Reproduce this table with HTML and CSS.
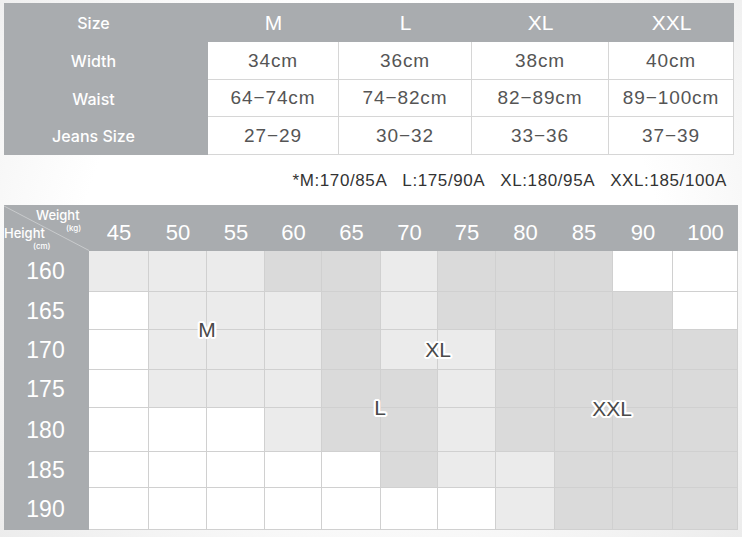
FILE: index.html
```html
<!DOCTYPE html>
<html>
<head>
<meta charset="utf-8">
<link rel="stylesheet" href="styles.css">
</head>
<body>
<div class="page">
  <div class="sizes">
    <div class="lab head">Size</div>
    <div class="hd">M</div><div class="hd">L</div><div class="hd">XL</div><div class="hd">XXL</div>
    <div class="lab">Width</div>
    <div class="val">34cm</div><div class="val">36cm</div><div class="val">38cm</div><div class="val">40cm</div>
    <div class="lab">Waist</div>
    <div class="val">64−74cm</div><div class="val">74−82cm</div><div class="val">82−89cm</div><div class="val">89−100cm</div>
    <div class="lab">Jeans Size</div>
    <div class="val">27−29</div><div class="val">30−32</div><div class="val">33−36</div><div class="val">37−39</div>
  </div>

  <div class="note">
    <span>*M:170/85A</span><span>L:175/90A</span><span>XL:180/95A</span><span>XXL:185/100A</span>
  </div>

  <div class="chart">
    <div class="corner">
      <svg class="diag" width="85" height="46" viewBox="0 0 85 46"><line x1="0" y1="1" x2="86" y2="46" stroke="#c8cacc" stroke-width="1"/></svg>
      <span class="wt">Weight</span><span class="kg">(kg)</span>
      <span class="ht">Height</span><span class="cm">(cm)</span>
    </div>
    <div class="ch">45</div><div class="ch">50</div><div class="ch">55</div><div class="ch">60</div><div class="ch">65</div><div class="ch">70</div><div class="ch">75</div><div class="ch">80</div><div class="ch">85</div><div class="ch">90</div><div class="ch">100</div>

    <div class="rh">160</div>
    <div class="c l"></div><div class="c l"></div><div class="c l"></div><div class="c d"></div><div class="c d"></div><div class="c l"></div><div class="c d"></div><div class="c d"></div><div class="c d"></div><div class="c w"></div><div class="c w"></div>

    <div class="rh">165</div>
    <div class="c w"></div><div class="c l"></div><div class="c l"></div><div class="c l"></div><div class="c d"></div><div class="c l"></div><div class="c d"></div><div class="c d"></div><div class="c d"></div><div class="c d"></div><div class="c w"></div>

    <div class="rh">170</div>
    <div class="c w"></div><div class="c l"></div><div class="c l"></div><div class="c l"></div><div class="c d"></div><div class="c l"></div><div class="c l"></div><div class="c d"></div><div class="c d"></div><div class="c d"></div><div class="c d"></div>

    <div class="rh">175</div>
    <div class="c w"></div><div class="c l"></div><div class="c l"></div><div class="c l"></div><div class="c d"></div><div class="c d"></div><div class="c l"></div><div class="c d"></div><div class="c d"></div><div class="c d"></div><div class="c d"></div>

    <div class="rh">180</div>
    <div class="c w"></div><div class="c w"></div><div class="c w"></div><div class="c l"></div><div class="c d"></div><div class="c d"></div><div class="c l"></div><div class="c d"></div><div class="c d"></div><div class="c d"></div><div class="c d"></div>

    <div class="rh">185</div>
    <div class="c w"></div><div class="c w"></div><div class="c w"></div><div class="c w"></div><div class="c w"></div><div class="c d"></div><div class="c l"></div><div class="c l"></div><div class="c d"></div><div class="c d"></div><div class="c d"></div>

    <div class="rh">190</div>
    <div class="c w"></div><div class="c w"></div><div class="c w"></div><div class="c w"></div><div class="c w"></div><div class="c w"></div><div class="c w"></div><div class="c l"></div><div class="c d"></div><div class="c d"></div><div class="c d"></div>

    <span class="tag tag-m">M</span>
    <span class="tag tag-xl">XL</span>
    <span class="tag tag-l">L</span>
    <span class="tag tag-xxl">XXL</span>
  </div>
</div>
</body>
</html>
```

FILE: styles.css
```css
* { box-sizing: border-box; }
html, body { margin: 0; padding: 0; }
body {
  width: 742px;
  height: 537px;
  overflow: hidden;
  background: radial-gradient(ellipse at 50% 45%, #ffffff 55%, #ececec 100%);
  font-family: "Liberation Sans", Arial, sans-serif;
}
.page {
  padding: 3px 0 0 4px;
}

/* top size table */
.sizes {
  display: grid;
  grid-template-columns: 204px 131px 133px 137px 125px;
  grid-template-rows: 39px 38px 37px 38px;
  background: #a9acaf;
  width: 730px;
}
.lab {
  display: flex;
  align-items: center;
  justify-content: center;
  padding-right: 25px;
  color: #fff;
  font-family: Inter, "Open Sans", sans-serif;
  font-weight: 500;
  font-size: 16px;
}
.hd {
  display: flex;
  align-items: center;
  justify-content: center;
  color: #fff;
  font-size: 21px;
  font-family: "Liberation Sans", Arial, sans-serif;
}
.val {
  display: flex;
  align-items: center;
  justify-content: center;
  background: #fff;
  color: #555;
  font-size: 19px;
  letter-spacing: 0.9px;
  border-right: 1px solid #d6d6d6;
  border-bottom: 1px solid #d6d6d6;
}

/* note */
.note {
  height: 50px;
  display: flex;
  align-items: center;
  justify-content: flex-end;
  gap: 15px;
  padding-right: 11px;
  padding-top: 2px;
  color: #333;
  font-size: 17px;
  letter-spacing: 0.6px;
  width: 734px;
}

/* weight/height chart */
.chart {
  position: relative;
  display: grid;
  grid-template-columns: 85px 60px 58px 58px 57px 59px 57px 58px 59px 58px 60px 65px;
  grid-template-rows: 46px 41px 38px 40px 38px 44px 36px 42px;
  background: #a9acaf;
  width: 734px;
}
.corner {
  position: relative;
  color: #fff;
  font-family: Inter, "Open Sans", sans-serif;
  font-weight: 500;
  line-height: 1;
}
.diag { position: absolute; left: 0; top: 0; }
.wt { position: absolute; left: 32px; top: 4px; font-size: 13px; }
.kg { position: absolute; left: 62px; top: 19px; font-size: 8px; }
.ht { position: absolute; left: 0; top: 22px; font-size: 13px; }
.cm { position: absolute; left: 29px; top: 37px; font-size: 8px; }
.ch {
  display: flex;
  align-items: center;
  justify-content: center;
  color: #fff;
  font-size: 22px;
  padding-top: 9px;
}
.rh {
  display: flex;
  align-items: center;
  justify-content: center;
  color: #fff;
  font-size: 23px;
  padding-right: 2px;
}
.c {
  border-right: 1px solid #d0d0d0;
  border-bottom: 1px solid #d0d0d0;
}
.c.w { background: #ffffff; }
.c.l { background: #ebebeb; }
.c.d { background: #dadada; }

.tag {
  position: absolute;
  transform: translate(-50%, -50%);
  color: #4a4a4a;
  font-size: 21px;
  text-shadow:
    1px 0 0 #fff, -1px 0 0 #fff, 0 1px 0 #fff, 0 -1px 0 #fff,
    2px 0 0 #fff, -2px 0 0 #fff, 0 2px 0 #fff, 0 -2px 0 #fff,
    1px 1px 0 #fff, -1px -1px 0 #fff, 1px -1px 0 #fff, -1px 1px 0 #fff,
    2px 1px 0 #fff, -2px 1px 0 #fff, 2px -1px 0 #fff, -2px -1px 0 #fff,
    1px 2px 0 #fff, -1px 2px 0 #fff, 1px -2px 0 #fff, -1px -2px 0 #fff;
}
.tag-m { left: 203px; top: 125px; }
.tag-xl { left: 434px; top: 145px; }
.tag-l { left: 376px; top: 203px; }
.tag-xxl { left: 608px; top: 204px; }
```
